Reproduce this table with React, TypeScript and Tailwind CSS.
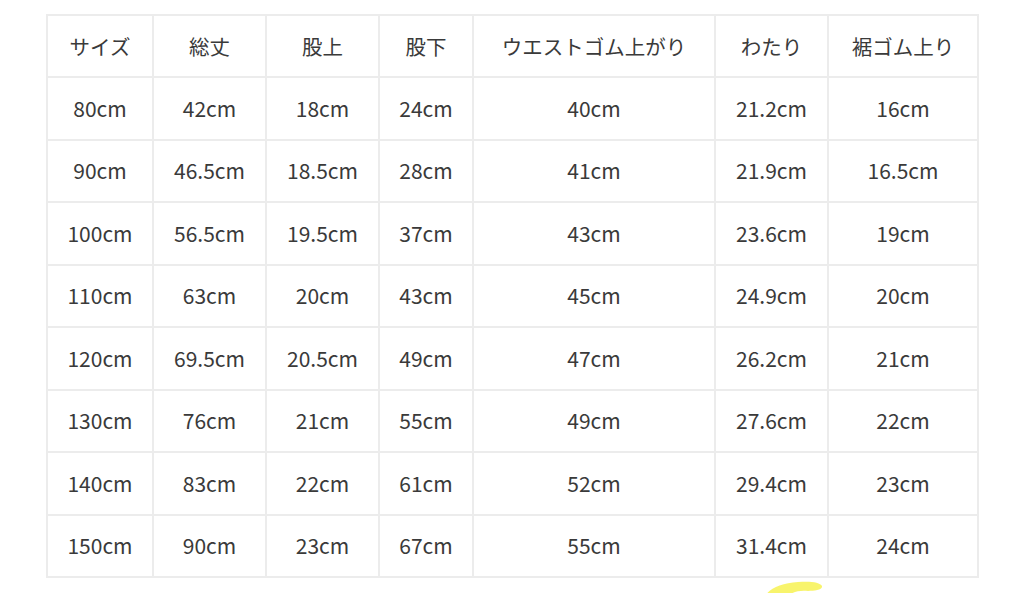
import React from 'react';

const headers = ['サイズ', '総丈', '股上', '股下', 'ウエストゴム上がり', 'わたり', '裾ゴム上り'];

const rows: string[][] = [
  ['80cm', '42cm', '18cm', '24cm', '40cm', '21.2cm', '16cm'],
  ['90cm', '46.5cm', '18.5cm', '28cm', '41cm', '21.9cm', '16.5cm'],
  ['100cm', '56.5cm', '19.5cm', '37cm', '43cm', '23.6cm', '19cm'],
  ['110cm', '63cm', '20cm', '43cm', '45cm', '24.9cm', '20cm'],
  ['120cm', '69.5cm', '20.5cm', '49cm', '47cm', '26.2cm', '21cm'],
  ['130cm', '76cm', '21cm', '55cm', '49cm', '27.6cm', '22cm'],
  ['140cm', '83cm', '22cm', '61cm', '52cm', '29.4cm', '23cm'],
  ['150cm', '90cm', '23cm', '67cm', '55cm', '31.4cm', '24cm'],
];

const widths = ['w-[106px]', 'w-[113px]', 'w-[113px]', 'w-[94px]', 'w-[242px]', 'w-[113px]', 'w-[150px]'];

const App: React.FC = () => {
  return (
    <div className="w-[1024px] h-[593px] bg-white overflow-hidden pt-[14px] pl-[46px] font-['Noto_Sans_CJK_JP','Noto_Sans',sans-serif] text-[#3a3a3a]">
      <table className="table-fixed border-collapse w-[932px] text-[21px]">
        <colgroup>
          {widths.map((w, i) => (
            <col key={i} className={w} />
          ))}
        </colgroup>
        <thead>
          <tr className="h-[62px]">
            {headers.map((h) => (
              <th key={h} className="border-2 border-[#ececec] font-normal text-center p-0 text-[20.5px]">
                {h}
              </th>
            ))}
          </tr>
        </thead>
        <tbody>
          {rows.map((r, i) => (
            <tr key={i} className="h-[62.5px]">
              {r.map((c, j) => (
                <td key={j} className="border-2 border-[#ececec] text-center p-0">
                  {c}
                </td>
              ))}
            </tr>
          ))}
        </tbody>
      </table>

      {/* yellow highlighter mark */}
      <svg className="ml-[718px] mt-[2px]" width="62" height="16" viewBox="0 0 62 16">
        <path
          d="M1 16 C6 8, 18 3, 34 2 C46 1, 56 2, 58 6 C59 10, 50 11, 44 11 C36 10, 28 12, 24 16 Z"
          fill="#f7f35c"
          opacity="0.9"
        />
      </svg>
    </div>
  );
};

export default App;
